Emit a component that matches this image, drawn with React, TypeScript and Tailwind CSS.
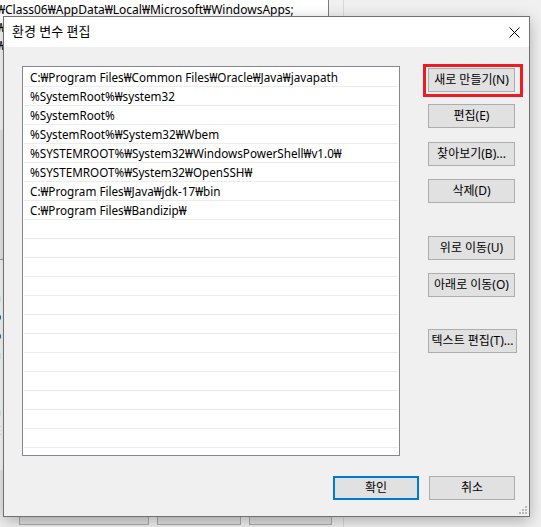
const paths = [
  'C:₩Program Files₩Common Files₩Oracle₩Java₩javapath',
  '%SystemRoot%₩system32',
  '%SystemRoot%',
  '%SystemRoot%₩System32₩Wbem',
  '%SYSTEMROOT%₩System32₩WindowsPowerShell₩v1.0₩',
  '%SYSTEMROOT%₩System32₩OpenSSH₩',
  'C:₩Program Files₩Java₩jdk-17₩bin',
  'C:₩Program Files₩Bandizip₩',
];

const font = "font-['Noto_Sans','Noto_Sans_CJK_KR',sans-serif]";

function WinButton({ label, className = '' }: { label: string; className?: string }) {
  return (
    <div
      className={`h-[24px] flex items-center justify-center bg-[#e1e1e1] border border-[#adadad] text-[12px] text-black whitespace-nowrap ${className}`}
    >
      {label}
    </div>
  );
}

export default function App() {
  const rows = [...paths, ...Array(14).fill('')];

  return (
    <div className={`relative w-[541px] h-[527px] overflow-hidden bg-[#f0f0f0] text-black ${font}`}>
      {/* 뒤쪽 창 */}
      <div className="flex h-full">
        <div className="w-[343px] flex flex-col">
          <div className="w-[332px] h-[130px] bg-white border-r border-[#7a7a7a] overflow-hidden text-[12px] leading-[18px] -ml-[3px] pt-[1px]">
            <div>₩Class06₩AppData₩Local₩Microsoft₩WindowsApps;</div>
            <div>₩</div>
            <div>₩</div>
          </div>
          <div className="h-[130px] border-b border-[#a0a0a0]" />
          <div className="h-[210px] bg-white text-[12px] leading-[19px] -ml-[6px] pt-[28px]">
            <div>a</div>
            <div>o</div>
            <div>o</div>
            <div>a</div>
            <div>&nbsp;</div>
            <div>l</div>
            <div>a</div>
            <div>E</div>
          </div>
          <div className="flex-1" />
          <div className="flex gap-[8px] pl-[19px] pb-[2px]">
            <div className="w-[130px] h-[23px] border border-[#adadad] bg-[#e1e1e1]" />
            <div className="w-[84px] h-[23px] border border-[#adadad] bg-[#e1e1e1]" />
            <div className="w-[83px] h-[23px] border border-[#adadad] bg-[#e1e1e1]" />
          </div>
        </div>
        <div className="flex-1 border-l border-[#d9d9d9] bg-[#f0f0f0]" />
      </div>

      {/* 환경 변수 편집 대화상자 */}
      <div className="absolute left-[3px] top-[16px] w-[527px] h-[501px] border border-[#707070] bg-[#f0f0f0] flex flex-col shadow-[0_4px_14px_rgba(0,0,0,0.28)]">
        <div className="h-[30px] bg-white flex items-center justify-between pl-[8px] pr-[9px]">
          <span className="text-[13px]">환경 변수 편집</span>
          <svg width="11" height="11" viewBox="0 0 11 11">
            <path d="M0.5 0.5 L10.5 10.5 M10.5 0.5 L0.5 10.5" stroke="#000" strokeWidth="1" />
          </svg>
        </div>

        <div className="flex pl-[18px] pt-[19px]">
          <div className="w-[378px] h-[390px] bg-white border border-[#828790] overflow-hidden pt-[1px]">
            {rows.map((p, i) => (
              <div key={i} className="h-[19px] mx-[1px] border-b border-[#ececec] pl-[6px] text-[11.7px] leading-[18px] whitespace-nowrap">
                {p}
              </div>
            ))}
          </div>

          <div className="ml-[28px] flex flex-col">
            <div className="relative mt-[2px]">
              <WinButton label="새로 만들기(N)" className="w-[87px]" />
              <div className="absolute -left-[5px] -top-[4px] -right-[6px] -bottom-[5px] border-[3px] border-[#ed1c24]" />
            </div>
            <WinButton label="편집(E)" className="w-[87px] mt-[12px]" />
            <WinButton label="찾아보기(B)..." className="w-[87px] mt-[14px]" />
            <WinButton label="삭제(D)" className="w-[87px] mt-[13px]" />
            <WinButton label="위로 이동(U)" className="w-[87px] mt-[33px]" />
            <WinButton label="아래로 이동(O)" className="w-[87px] mt-[13px]" />
            <WinButton label="텍스트 편집(T)..." className="w-[89px] mt-[32px]" />
          </div>
        </div>

        <div className="flex justify-end gap-[10px] pr-[14px] mt-[20px]">
          <div className="w-[86px] h-[24px] flex items-center justify-center bg-[#e1e1e1] border-2 border-[#0078d7] text-[12px]">
            확인
          </div>
          <WinButton label="취소" className="w-[86px]" />
        </div>

        <svg className="absolute right-[2px] bottom-[2px]" width="8" height="8" viewBox="0 0 8 8">
          <rect x="6" y="0" width="2" height="2" fill="#b8b8b8" />
          <rect x="3" y="3" width="2" height="2" fill="#b8b8b8" />
          <rect x="6" y="3" width="2" height="2" fill="#b8b8b8" />
          <rect x="0" y="6" width="2" height="2" fill="#b8b8b8" />
          <rect x="3" y="6" width="2" height="2" fill="#b8b8b8" />
          <rect x="6" y="6" width="2" height="2" fill="#b8b8b8" />
        </svg>
      </div>
    </div>
  );
}
